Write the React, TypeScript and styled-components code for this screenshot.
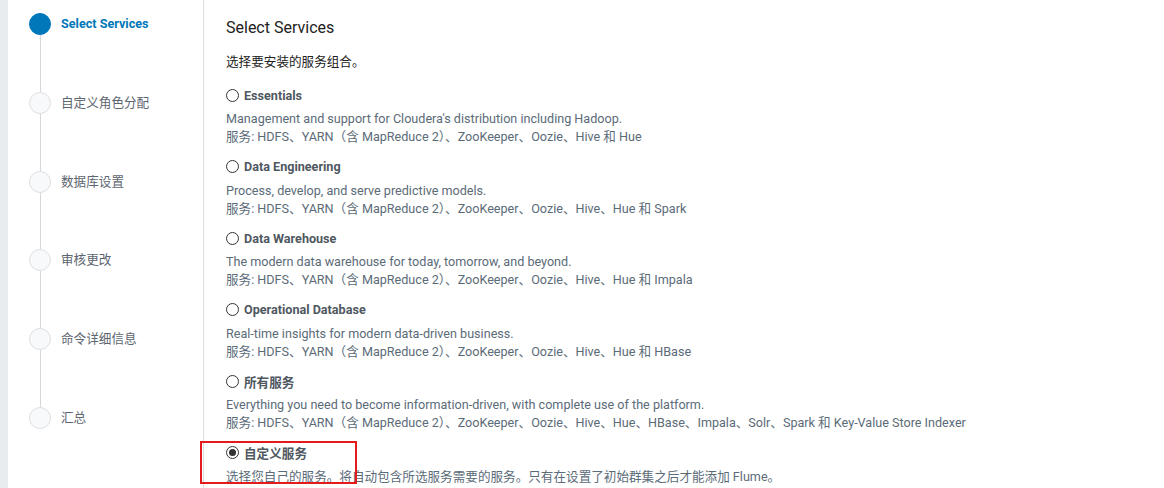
import React from "react";
import styled, { createGlobalStyle } from "styled-components";

const GlobalStyle = createGlobalStyle`
  html, body {
    margin: 0;
    padding: 0;
    background: #ffffff;
  }
  body {
    font-family: Roboto, "Noto Sans CJK SC", sans-serif;
    font-size: 12.6px;
    color: #222;
  }
`;

interface Step {
  label: string;
  active?: boolean;
}

interface ServiceOption {
  title: string;
  desc: string;
  services?: string;
  checked?: boolean;
  highlight?: boolean;
}

const steps: Step[] = [
  { label: "Select Services", active: true },
  { label: "自定义角色分配" },
  { label: "数据库设置" },
  { label: "审核更改" },
  { label: "命令详细信息" },
  { label: "汇总" },
];

const base = "服务: HDFS、YARN（含 MapReduce 2）、ZooKeeper、Oozie、";

const options: ServiceOption[] = [
  {
    title: "Essentials",
    desc: "Management and support for Cloudera's distribution including Hadoop.",
    services: base + "Hive 和 Hue",
  },
  {
    title: "Data Engineering",
    desc: "Process, develop, and serve predictive models.",
    services: base + "Hive、Hue 和 Spark",
  },
  {
    title: "Data Warehouse",
    desc: "The modern data warehouse for today, tomorrow, and beyond.",
    services: base + "Hive、Hue 和 Impala",
  },
  {
    title: "Operational Database",
    desc: "Real-time insights for modern data-driven business.",
    services: base + "Hive、Hue 和 HBase",
  },
  {
    title: "所有服务",
    desc: "Everything you need to become information-driven, with complete use of the platform.",
    services:
      base + "Hive、Hue、HBase、Impala、Solr、Spark 和 Key-Value Store Indexer",
  },
  {
    title: "自定义服务",
    desc: "选择您自己的服务。将自动包含所选服务需要的服务。只有在设置了初始群集之后才能添加 Flume。",
    checked: true,
    highlight: true,
  },
];

const Page = styled.div`
  display: flex;
  height: 488px;
  overflow: hidden;
`;

const Gutter = styled.div`
  width: 8px;
  flex: none;
  background: #e9ecef;
`;

const Sidebar = styled.nav`
  width: 196px;
  flex: none;
  border-right: 1px solid #dcdfe2;
  padding: 13px 0 0 21px;
  box-sizing: border-box;
`;

const StepList = styled.ul`
  list-style: none;
  margin: 0;
  padding: 0;
`;

const StepItem = styled.li`
  position: relative;
  display: flex;
  align-items: flex-start;
  gap: 10px;
  height: 78.8px;

  &:not(:last-child)::after {
    content: "";
    position: absolute;
    left: 11px;
    top: 22px;
    width: 1px;
    height: 57px;
    background: #d6d9dc;
  }
`;

const Dot = styled.span<{ $active?: boolean }>`
  width: 22px;
  height: 22px;
  flex: none;
  box-sizing: border-box;
  border-radius: 50%;
  background: ${({ $active }) => ($active ? "#0077b8" : "#f8f9fb")};
  border: 1px solid ${({ $active }) => ($active ? "#0077b8" : "#dcdfe2")};
`;

const StepLabel = styled.span<{ $active?: boolean }>`
  line-height: 22px;
  font-size: 12.6px;
  font-weight: ${({ $active }) => ($active ? 700 : 400)};
  color: ${({ $active }) => ($active ? "#0077b8" : "#5d6670")};
`;

const Main = styled.main`
  flex: 1;
  padding: 18px 0 0 22px;
`;

const Title = styled.h2`
  margin: 0;
  font-size: 16px;
  font-weight: 400;
  line-height: 20px;
  color: #222;
`;

const Lead = styled.p`
  margin: 15px 0 0;
  line-height: 18px;
  color: #222;
`;

const OptionList = styled.div`
  display: flex;
  flex-direction: column;
  gap: 11.6px;
  margin-top: 15px;
`;

const Option = styled.div`
  position: relative;
  display: flex;
  flex-direction: column;
`;

const OptionHead = styled.label`
  display: flex;
  align-items: center;
  gap: 5px;
  height: 18px;
  margin-bottom: 6px;
  margin-left: -1px;
  font-weight: 700;
  color: #4f5861;
`;

const Radio = styled.span<{ $checked?: boolean }>`
  position: relative;
  width: 13px;
  height: 13px;
  box-sizing: border-box;
  border-radius: 50%;
  border: 1px solid #333;
  background: #fff;
  margin-left: 1px;

  &::after {
    content: "";
    display: ${({ $checked }) => ($checked ? "block" : "none")};
    position: absolute;
    left: 2px;
    top: 2px;
    width: 7px;
    height: 7px;
    border-radius: 50%;
    background: #333;
  }
`;

const Line = styled.div`
  line-height: 18px;
  color: #5b6b78;
  white-space: nowrap;
`;

const Highlight = styled.div`
  position: absolute;
  left: -26px;
  top: -3px;
  width: 157px;
  height: 43px;
  box-sizing: border-box;
  border: 2px solid #e41b1b;
  pointer-events: none;
`;

export default function App() {
  return (
    <>
      <GlobalStyle />
      <Page>
        <Gutter />
        <Sidebar>
          <StepList>
            {steps.map((s) => (
              <StepItem key={s.label}>
                <Dot $active={s.active} />
                <StepLabel $active={s.active}>{s.label}</StepLabel>
              </StepItem>
            ))}
          </StepList>
        </Sidebar>
        <Main>
          <Title>Select Services</Title>
          <Lead>选择要安装的服务组合。</Lead>
          <OptionList>
            {options.map((o) => (
              <Option key={o.title}>
                <OptionHead>
                  <Radio $checked={o.checked} />
                  {o.title}
                </OptionHead>
                <Line>{o.desc}</Line>
                {o.services && <Line>{o.services}</Line>}
                {o.highlight && <Highlight />}
              </Option>
            ))}
          </OptionList>
        </Main>
      </Page>
    </>
  );
}
